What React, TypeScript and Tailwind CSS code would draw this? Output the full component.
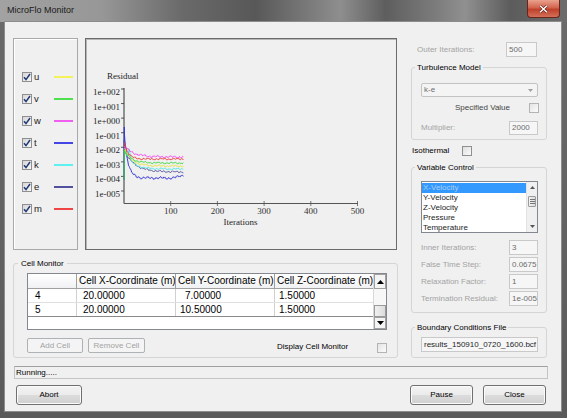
import React from "react";

type LegendItem = { key: string; line: string };
const legend: LegendItem[] = [
  { key: "u", line: "bg-[#f2f25a]" },
  { key: "v", line: "bg-[#4fe04f]" },
  { key: "w", line: "bg-[#f060f0]" },
  { key: "t", line: "bg-[#4545e5]" },
  { key: "k", line: "bg-[#5ff0f0]" },
  { key: "e", line: "bg-[#50509e]" },
  { key: "m", line: "bg-[#f04545]" },
];

type Curve = {
  color: string;
  pre: [number, number][];
  y0: number;
  y1: number;
  tau: number;
  amp: number;
  seed: number;
  spike?: number;
  rise?: number;
};

const curves: Curve[] = [
  { color: "#3a3ad8", pre: [[124, 180], [124.3, 127]], y0: 128, y1: 178, tau: 7.5, amp: 1.1, seed: 1.3, rise: 3 },
  { color: "#55559f", pre: [[124, 140]], y0: 150, y1: 172, tau: 22, amp: 0.8, seed: 2.1 },
  { color: "#5ae8e8", pre: [], y0: 149, y1: 169, tau: 16, amp: 0.9, seed: 0.4, spike: 11 },
  { color: "#e6e640", pre: [], y0: 147, y1: 166, tau: 15, amp: 0.8, seed: 3.3 },
  { color: "#40d840", pre: [[124, 180], [124.3, 150]], y0: 150, y1: 163, tau: 15, amp: 0.8, seed: 4.2 },
  { color: "#f050f0", pre: [], y0: 146, y1: 157, tau: 20, amp: 1.0, seed: 5.1 },
  { color: "#f03a3a", pre: [], y0: 140, y1: 159, tau: 8, amp: 0.8, seed: 0.9 },
];

function buildPath(c: Curve): string {
  const pts: string[] = c.pre.map(([x, y]) => `${x},${y}`);
  for (let i = 1; i <= 125; i++) {
    const x = 124 + i * 0.474;
    let y = c.y1 + (c.y0 - c.y1) * Math.exp(-i / c.tau);
    y +=
      c.amp *
      (0.6 * Math.sin(i * 0.7 + c.seed) +
        0.4 * Math.sin(i * 1.9 + c.seed * 1.7) +
        0.5 * Math.sin(i * 0.21 + c.seed * 0.5));
    if (c.spike) y -= 11 * Math.exp(-((i - c.spike) * (i - c.spike)) / 5);
    if (c.rise) y -= c.rise * Math.max(0, (i - 105) / 20);
    pts.push(`${x.toFixed(1)},${y.toFixed(1)}`);
  }
  return "M" + pts.join(" L");
}

const decades = ["1e+002", "1e+001", "1e+000", "1e-001", "1e-002", "1e-003", "1e-004", "1e-005"];
const xticks = [
  { v: "100", x: 170.7 },
  { v: "200", x: 217.4 },
  { v: "300", x: 264.1 },
  { v: "400", x: 310.8 },
  { v: "500", x: 357.5 },
];

function Chart() {
  const serif = "Liberation Serif, serif";
  return (
    <svg width="310" height="210" viewBox="86 39 310 210" className="block">
      <text x="107" y="79" fontFamily={serif} fontSize="9" fill="#1e1e1e">
        Residual
      </text>
      {decades.map((d, k) => {
        const y = 89 + k * 14.57;
        return (
          <g key={d}>
            <text x="120" y={y + 6} textAnchor="end" fontFamily={serif} fontSize="9" fill="#1e1e1e">
              {d}
            </text>
            <line x1="121" y1={y} x2="124" y2={y} stroke="#333" strokeWidth="0.8" />
          </g>
        );
      })}
      <line x1="124" y1="88" x2="124" y2="203.5" stroke="#333" strokeWidth="1" />
      <line x1="124" y1="203.5" x2="358" y2="203.5" stroke="#555" strokeWidth="1.2" />
      {xticks.map((t) => (
        <g key={t.v}>
          <line x1={t.x} y1="201" x2={t.x} y2="206" stroke="#555" strokeWidth="0.8" />
          <text x={t.x} y="214" textAnchor="middle" fontFamily={serif} fontSize="9" fill="#333">
            {t.v}
          </text>
        </g>
      ))}
      <text x="240.5" y="225" textAnchor="middle" fontFamily={serif} fontSize="9" fill="#1e1e1e">
        Iterations
      </text>
      {curves.map((c, i) => (
        <path key={i} d={buildPath(c)} fill="none" stroke={c.color} strokeWidth="1" />
      ))}
    </svg>
  );
}

function CheckedBox() {
  return (
    <span className="w-[10px] h-[10px] shrink-0 border border-[#8e8f8f] bg-[linear-gradient(135deg,#d6d6d6,#f7f7f7)] flex items-center justify-center">
      <svg width="8" height="8" viewBox="0 0 8 8">
        <path d="M1 4.3 L3 6.6 L7 1" fill="none" stroke="#1f3a78" strokeWidth="1.5" />
      </svg>
    </span>
  );
}

function EmptyBox({ light }: { light?: boolean }) {
  return (
    <span
      className={
        light
          ? "block w-[10px] h-[10px] shrink-0 border border-[#b4b4b4] bg-[linear-gradient(135deg,#e4e4e4,#fbfbfb)]"
          : "block w-[10px] h-[10px] shrink-0 border border-[#8e8f8f] bg-[linear-gradient(135deg,#dedede,#fbfbfb)]"
      }
    />
  );
}

function Legend() {
  return (
    <div className="w-[65px] h-[212px] border border-[#a9a9a9] shadow-[inset_1px_1px_0_#ffffff] flex flex-col gap-[11px] pt-[32px] pl-[8px]">
      {legend.map((l) => (
        <div key={l.key} className="flex items-center h-[11px]">
          <CheckedBox />
          <span className="ml-[2px] w-[12px] text-[9.5px] leading-none text-[#222]">{l.key}</span>
          <span className={`ml-[8px] w-[19px] h-[2px] ${l.line}`} />
        </div>
      ))}
    </div>
  );
}

function WinButton({ label, className }: { label: string; className: string }) {
  return (
    <div
      className={`${className} h-[20px] rounded-[3px] border border-[#707070] bg-[linear-gradient(#f3f3f3_0%,#ebebeb_50%,#dddddd_50%,#cfcfcf_100%)] shadow-[inset_0_0_0_1px_#fbfbfb] flex items-center justify-center text-[8px] text-black`}
    >
      {label}
    </div>
  );
}

function DisabledButton({ label, className }: { label: string; className: string }) {
  return (
    <div
      className={`${className} h-[15px] rounded-[2px] border border-[#adb2b5] bg-[#f4f4f4] flex items-center justify-center text-[8px] text-[#a3a3a3]`}
    >
      {label}
    </div>
  );
}

function CellMonitor() {
  return (
    <fieldset className="mt-[8px] h-[100px] border border-[#d5d5d5] rounded-[3px] p-0 m-0 min-w-0">
      <legend className="ml-[4px] px-[3px] text-[8px] leading-[11px] text-black">Cell Monitor</legend>
      <div className="pl-[13px] pt-[4px] flex flex-col">
        <div className="w-[360px] h-[57px] border border-[#828790] bg-white flex text-[10px] leading-none">
          <div className="w-[345px] flex flex-col">
            <div className="flex h-[15px] bg-[linear-gradient(#ffffff,#f0f1f3)] border-b border-[#a0a0a0]">
              <div className="w-[49px] border-r border-[#a0a0a0]" />
              <div className="w-[99px] border-r border-[#a0a0a0] pl-[2px] flex items-center whitespace-nowrap overflow-hidden">
                Cell X-Coordinate (m)
              </div>
              <div className="w-[99px] border-r border-[#a0a0a0] pl-[2px] flex items-center whitespace-nowrap overflow-hidden">
                Cell Y-Coordinate (m)
              </div>
              <div className="w-[98px] pl-[2px] flex items-center whitespace-nowrap overflow-hidden">
                Cell Z-Coordinate (m)
              </div>
            </div>
            <div className="flex h-[14px] border-b border-[#e0e0e0]">
              <div className="w-[49px] border-r border-[#d0d0d0] pl-[7px] flex items-center">4</div>
              <div className="w-[99px] border-r border-[#d0d0d0] pl-[6px] flex items-center">20.00000</div>
              <div className="w-[99px] border-r border-[#d0d0d0] pl-[9px] flex items-center">7.00000</div>
              <div className="w-[98px] pl-[4px] flex items-center">1.50000</div>
            </div>
            <div className="flex h-[14px] border-b border-[#8a8a8a]">
              <div className="w-[49px] border-r border-[#d0d0d0] pl-[7px] flex items-center">5</div>
              <div className="w-[99px] border-r border-[#d0d0d0] pl-[6px] flex items-center">20.00000</div>
              <div className="w-[99px] border-r border-[#d0d0d0] pl-[4px] flex items-center">10.50000</div>
              <div className="w-[98px] pl-[4px] flex items-center">1.50000</div>
            </div>
          </div>
          <div className="w-[13px] flex flex-col bg-[#f7f7f7] border-l border-[#d8d8d8]">
            <div className="h-[15px] border border-[#a0a0a0] bg-[#f4f4f4] flex items-center justify-center">
              <svg width="7" height="4" viewBox="0 0 7 4">
                <path d="M0 4 L3.5 0 L7 4 Z" fill="#000" />
              </svg>
            </div>
            <div className="h-[16px]" />
            <div className="h-[12px] border border-[#9a9a9a] bg-[linear-gradient(90deg,#f1f1f1,#dcdcdc)]" />
            <div className="flex-1 border border-[#a0a0a0] bg-[#f4f4f4] flex items-center justify-center">
              <svg width="7" height="4" viewBox="0 0 7 4">
                <path d="M0 0 L3.5 4 L7 0 Z" fill="#000" />
              </svg>
            </div>
          </div>
        </div>
        <div className="mt-[8px] flex items-center">
          <DisabledButton label="Add Cell" className="w-[56px]" />
          <DisabledButton label="Remove Cell" className="ml-[5px] w-[57px]" />
          <span className="ml-[132px] mt-[3px] text-[8px] leading-none text-black whitespace-nowrap w-[100px]">
            Display Cell Monitor
          </span>
          <span className="mt-[4px]">
            <EmptyBox light />
          </span>
        </div>
      </div>
    </fieldset>
  );
}

function SmallBox({ value, className }: { value: string; className: string }) {
  return (
    <div
      className={`${className} border border-[#c9c9c9] bg-[#f6f6f6] flex items-center pl-[2px] text-[8px] leading-none text-[#6d6d6d]`}
    >
      {value}
    </div>
  );
}

function LabeledRow({ label, value }: { label: string; value: string }) {
  return (
    <div className="flex items-center h-[15px]">
      <span className="pl-[9px] text-[8px] leading-none text-[#a3a3a3] whitespace-nowrap">{label}</span>
      <SmallBox value={value} className="ml-auto mr-[8px] w-[29px] h-[15px]" />
    </div>
  );
}

function RightColumn() {
  return (
    <div className="ml-[13px] w-[136px] flex flex-col">
      <div className="mt-[4px] h-[15px] flex items-center">
        <span className="pl-[6px] text-[8px] leading-none text-[#a3a3a3]">Outer Iterations:</span>
        <SmallBox value="500" className="ml-auto mr-[10px] w-[31px] h-[15px]" />
      </div>

      <fieldset className="mt-[5px] h-[78px] border border-[#d5d5d5] rounded-[3px] p-0 m-0 min-w-0">
        <legend className="ml-[3px] px-[2px] text-[8px] leading-[11px] text-black">Turbulence Model</legend>
        <div className="flex flex-col">
          <div className="mt-[10px] ml-[9px] w-[117px] h-[14px] rounded-[2px] border border-[#c3c3c3] bg-[#f4f4f4] flex items-center pl-[2px] text-[8px] leading-none text-[#6d6d6d]">
            <span>k-e</span>
            <svg className="ml-auto mr-[4px]" width="5" height="3" viewBox="0 0 5 3">
              <path d="M0 0 L2.5 3 L5 0 Z" fill="#a0a0a0" />
            </svg>
          </div>
          <div className="mt-[6px] h-[10px] flex items-center">
            <span className="pl-[43px] text-[8px] leading-none text-[#444] whitespace-nowrap">Specified Value</span>
            <span className="ml-auto mr-[7px]">
              <EmptyBox light />
            </span>
          </div>
          <div className="mt-[8px] h-[14px] flex items-center">
            <span className="pl-[9px] text-[8px] leading-none text-[#a3a3a3]">Multiplier:</span>
            <SmallBox value="2000" className="ml-auto mr-[8px] w-[29px] h-[14px]" />
          </div>
        </div>
      </fieldset>

      <div className="mt-[5px] h-[11px] flex items-center">
        <span className="pl-[1px] w-[51px] text-[8px] leading-none text-black">Isothermal</span>
        <EmptyBox />
      </div>

      <fieldset className="mt-[6px] h-[151px] border border-[#d5d5d5] rounded-[3px] p-0 m-0 min-w-0">
        <legend className="ml-[3px] px-[2px] text-[8px] leading-[11px] text-black">Variable Control</legend>
        <div className="flex flex-col">
          <div className="mt-[8px] ml-[9px] w-[117px] h-[52px] border border-[#828790] bg-white flex overflow-hidden">
            <div className="flex-1 pt-[1px] flex flex-col text-[8px] leading-[10px] text-[#1e1e1e] overflow-hidden">
              <div className="h-[10px] shrink-0 bg-[#3399ff] text-[#a9cdf3] pl-[1px]">X-Velocity</div>
              <div className="h-[10px] shrink-0 pl-[1px]">Y-Velocity</div>
              <div className="h-[10px] shrink-0 pl-[1px]">Z-Velocity</div>
              <div className="h-[10px] shrink-0 pl-[1px]">Pressure</div>
              <div className="h-[10px] shrink-0 pl-[1px]">Temperature</div>
            </div>
            <div className="w-[11px] flex flex-col bg-[#f0f0f0] border-l border-[#e3e3e3]">
              <div className="h-[11px] flex items-center justify-center">
                <svg width="5" height="3" viewBox="0 0 5 3">
                  <path d="M0 3 L2.5 0 L5 3 Z" fill="#555" />
                </svg>
              </div>
              <div className="mt-[3px] mx-[1px] h-[11px] rounded-[1px] border border-[#9a9a9a] bg-[linear-gradient(90deg,#f3f3f3,#dcdcdc)] flex flex-col items-center justify-center gap-[1px]">
                <span className="w-[5px] h-px bg-[#777]" />
                <span className="w-[5px] h-px bg-[#777]" />
                <span className="w-[5px] h-px bg-[#777]" />
              </div>
              <div className="flex-1" />
              <div className="h-[11px] flex items-center justify-center">
                <svg width="5" height="3" viewBox="0 0 5 3">
                  <path d="M0 0 L2.5 3 L5 0 Z" fill="#555" />
                </svg>
              </div>
            </div>
          </div>
          <div className="mt-[7px] flex flex-col gap-[2px]">
            <LabeledRow label="Inner Iterations:" value="3" />
            <LabeledRow label="False Time Step:" value="0.0675" />
            <LabeledRow label="Relaxation Factor:" value="1" />
            <LabeledRow label="Termination Residual:" value="1e-005" />
          </div>
        </div>
      </fieldset>

      <fieldset className="mt-[9px] h-[36px] border border-[#d5d5d5] rounded-[3px] p-0 m-0 min-w-0">
        <legend className="ml-[3px] px-[2px] text-[8px] leading-[11px] text-black">Boundary Conditions File</legend>
        <div className="mt-[4px] ml-[9px] w-[117px] h-[15px] border border-[#c9c9c9] bg-[#f6f6f6] flex items-center pl-[2px] text-[8px] leading-none text-[#1e1e1e] whitespace-nowrap overflow-hidden">
          results_150910_0720_1600.bcf
        </div>
      </fieldset>
    </div>
  );
}

function TitleBar() {
  return (
    <div className="h-[22px] flex items-start bg-[linear-gradient(90deg,#a2a2a2_0%,#979797_18%,#6a6a6a_32%,#585858_45%,#7c7c7c_55%,#8e8e8e_60%,#5e5e5e_68%,#808080_78%,#909090_82%,#5c5c5c_90%,#6c6c6c_100%)]">
      <span className="ml-[7px] mt-[5px] text-[9px] leading-[11px] text-[#1a1a1a]">MicroFlo Monitor</span>
      <div className="ml-auto mr-[7px] w-[33px] h-[18px] rounded-b-[4px] border border-[#6b2418] border-t-0 bg-[linear-gradient(#e9a28f_0%,#d2644e_45%,#c0402b_55%,#d3705a_100%)] flex items-center justify-center">
        <svg width="9" height="8" viewBox="0 0 9 8">
          <path d="M1 0.8 L8 7.2 M8 0.8 L1 7.2" stroke="#5a1a10" strokeWidth="2.6" />
          <path d="M1 0.8 L8 7.2 M8 0.8 L1 7.2" stroke="#ffffff" strokeWidth="1.5" />
        </svg>
      </div>
    </div>
  );
}

export default function App() {
  return (
    <div className="w-[567px] h-[418px] flex flex-col overflow-hidden bg-[linear-gradient(#6a6a6a,#5a5a5a)] font-['Liberation_Sans',Arial,sans-serif] text-black select-none">
      <TitleBar />
      <div className="ml-[5px] w-[556px] h-[389px] bg-[#f0f0f0] shadow-[0_0_0_1px_#8c8c8c] flex flex-col pt-[16px] pl-[8px]">
        <div className="flex items-start">
          <div className="w-[385px] flex flex-col">
            <div className="flex gap-[7px] h-[212px]">
              <Legend />
              <div className="w-[312px] h-[212px] border border-[#6b6b6b] shadow-[inset_1px_1px_0_#b5b5b5]">
                <Chart />
              </div>
            </div>
            <CellMonitor />
          </div>
          <RightColumn />
        </div>
        <div className="mt-[8px] ml-[1px] w-[534px] h-[13px] border border-[#c4c4c4] border-t-[#a0a0a0] flex items-center pl-[1px] text-[8px] leading-none text-black">
          Running.....
        </div>
        <div className="mt-[6px] flex items-center">
          <WinButton label="Abort" className="ml-[3px] w-[66px]" />
          <WinButton label="Pause" className="ml-auto w-[63px]" />
          <WinButton label="Close" className="ml-[10px] mr-[15px] w-[63px]" />
        </div>
      </div>
    </div>
  );
}
